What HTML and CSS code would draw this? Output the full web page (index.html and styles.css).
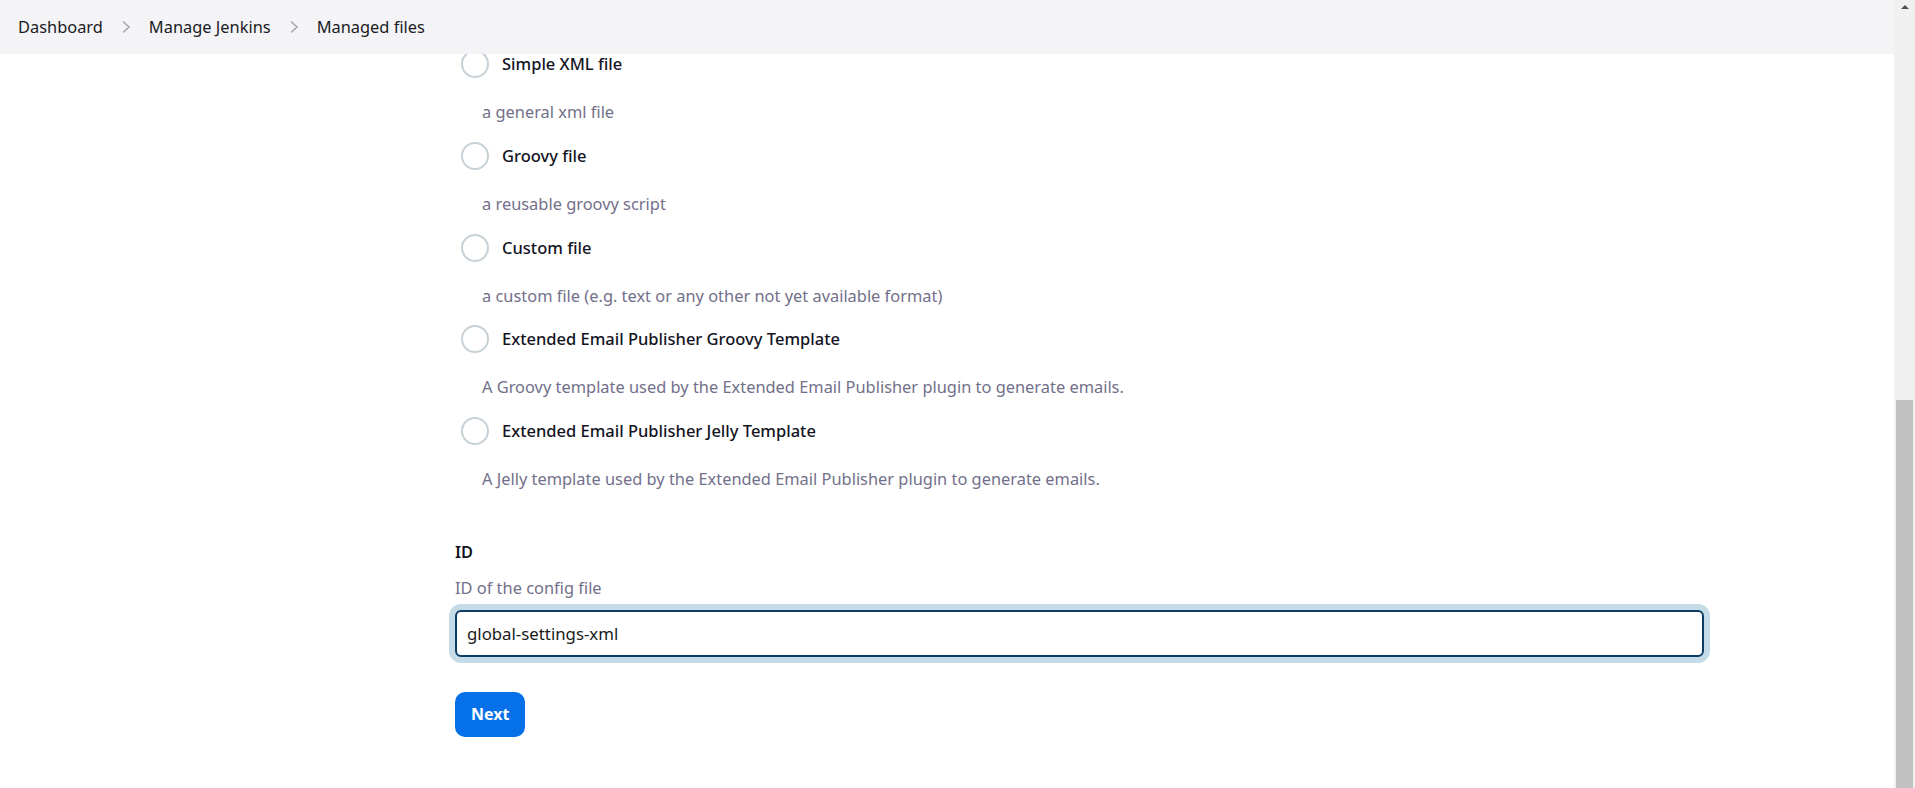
FILE: index.html
```html
<!DOCTYPE html>
<html lang="en">
<head>
<meta charset="utf-8">
<title>Managed files</title>
<link rel="stylesheet" href="styles.css">
</head>
<body>
<div class="window">
  <div class="viewport">
    <header class="topbar">
      <nav class="breadcrumbs">
        <a class="crumb" href="#">Dashboard</a>
        <svg class="sep" width="10" height="14" viewBox="0 0 10 14"><path d="M2 1.5 L8 7 L2 12.5" fill="none" stroke="#a3a3ad" stroke-width="1.4"/></svg>
        <a class="crumb" href="#">Manage Jenkins</a>
        <svg class="sep" width="10" height="14" viewBox="0 0 10 14"><path d="M2 1.5 L8 7 L2 12.5" fill="none" stroke="#a3a3ad" stroke-width="1.4"/></svg>
        <a class="crumb" href="#">Managed files</a>
      </nav>
    </header>
    <main class="main">
      <div class="radios">
        <div class="radio-item">
          <label class="radio-label"><span class="radio-circle"></span><span class="radio-text">Simple XML file</span></label>
          <div class="radio-desc">a general xml file</div>
        </div>
        <div class="radio-item">
          <label class="radio-label"><span class="radio-circle"></span><span class="radio-text">Groovy file</span></label>
          <div class="radio-desc">a reusable groovy script</div>
        </div>
        <div class="radio-item">
          <label class="radio-label"><span class="radio-circle"></span><span class="radio-text">Custom file</span></label>
          <div class="radio-desc">a custom file (e.g. text or any other not yet available format)</div>
        </div>
        <div class="radio-item">
          <label class="radio-label"><span class="radio-circle"></span><span class="radio-text">Extended Email Publisher Groovy Template</span></label>
          <div class="radio-desc">A Groovy template used by the Extended Email Publisher plugin to generate emails.</div>
        </div>
        <div class="radio-item">
          <label class="radio-label"><span class="radio-circle"></span><span class="radio-text">Extended Email Publisher Jelly Template</span></label>
          <div class="radio-desc">A Jelly template used by the Extended Email Publisher plugin to generate emails.</div>
        </div>
      </div>
      <div class="field">
        <div class="field-label">ID</div>
        <div class="field-desc">ID of the config file</div>
        <div class="input-wrap"><input class="text-input" type="text" value="global-settings-xml"></div>
      </div>
      <div class="actions">
        <button class="btn-primary" type="button">Next</button>
      </div>
    </main>
  </div>
  <div class="scrollbar">
    <div class="scroll-arrow"></div>
    <div class="scroll-track"><div class="scroll-thumb"></div></div>
  </div>
</div>
</body>
</html>
```

FILE: styles.css
```css
* { box-sizing: border-box; }
html, body { margin: 0; padding: 0; height: 100%; }
body {
  font-family: "Noto Sans", "Open Sans", "Liberation Sans", sans-serif;
  font-size: 16px;
  color: #14141f;
  background: #ffffff;
  overflow: hidden;
}
.window {
  display: flex;
  height: 788px;
}
.viewport {
  position: relative;
  flex: 1;
  overflow: hidden;
}
.topbar {
  position: absolute;
  top: 0; left: 0; right: 0;
  height: 54px;
  background: #f4f4f6;
  z-index: 2;
  display: flex;
  align-items: center;
  padding-left: 18px;
}
.breadcrumbs {
  display: flex;
  align-items: center;
  gap: 18px;
  padding-bottom: 1px;
}
.crumb {
  color: #1a1a25;
  text-decoration: none;
  font-size: 16.4px;
  line-height: 24px;
}
.sep { display: block; }

.main {
  padding: 50px 0 0 455px;
  width: 1704px;
}
.radios { padding-left: 6px; }
.radio-item { margin-bottom: 17.75px; }
.radio-label {
  display: flex;
  align-items: center;
  gap: 13px;
  height: 28px;
}
.radio-circle {
  width: 28px;
  height: 28px;
  border-radius: 50%;
  border: 2px solid #c8d1d6;
  background: #fff;
  flex: none;
}
.radio-text {
  font-size: 16.5px;
  line-height: 24px;
  color: #14141f;
  font-weight: 500;
}
.radio-desc {
  margin-top: 22px;
  margin-left: 21px;
  font-size: 16.4px;
  line-height: 24px;
  color: #72708a;
}
.field { margin-top: 49px; }
.field-label {
  font-size: 16.4px;
  line-height: 24px;
  font-weight: 600;
  color: #14141f;
}
.field-desc {
  margin-top: 12px;
  font-size: 16.4px;
  line-height: 24px;
  color: #72708a;
}
.input-wrap { margin-top: 9.5px; }
.text-input {
  display: block;
  width: 100%;
  height: 47px;
  border: 2px solid #0d3d62;
  border-radius: 6px;
  padding: 0 10px;
  font-family: inherit;
  font-size: 16.8px;
  color: #1a1a1a;
  background: #fff;
  box-shadow: 0 0 0 6px #c4dbe8;
  outline: none;
}
.actions { margin-top: 35px; }
.btn-primary {
  height: 45px;
  padding: 0 16px;
  border: none;
  border-radius: 10px;
  background: #0670e8;
  color: #ffffff;
  font-family: inherit;
  font-size: 16px;
  font-weight: 700;
  cursor: pointer;
}

.scrollbar {
  width: 21px;
  flex: none;
  background: #f0f0f0;
  display: flex;
  flex-direction: column;
  align-items: center;
}
.scroll-arrow {
  margin-top: 5px;
  width: 0; height: 0;
  border-left: 4.5px solid transparent;
  border-right: 4.5px solid transparent;
  border-bottom: 4px solid #505050;
}
.scroll-track {
  flex: 1;
  width: 100%;
  display: flex;
  flex-direction: column;
  padding: 0 2px 0 2px;
}
.scroll-thumb {
  margin-top: auto;
  height: 388px;
  background: #c1c1c1;
}
```
